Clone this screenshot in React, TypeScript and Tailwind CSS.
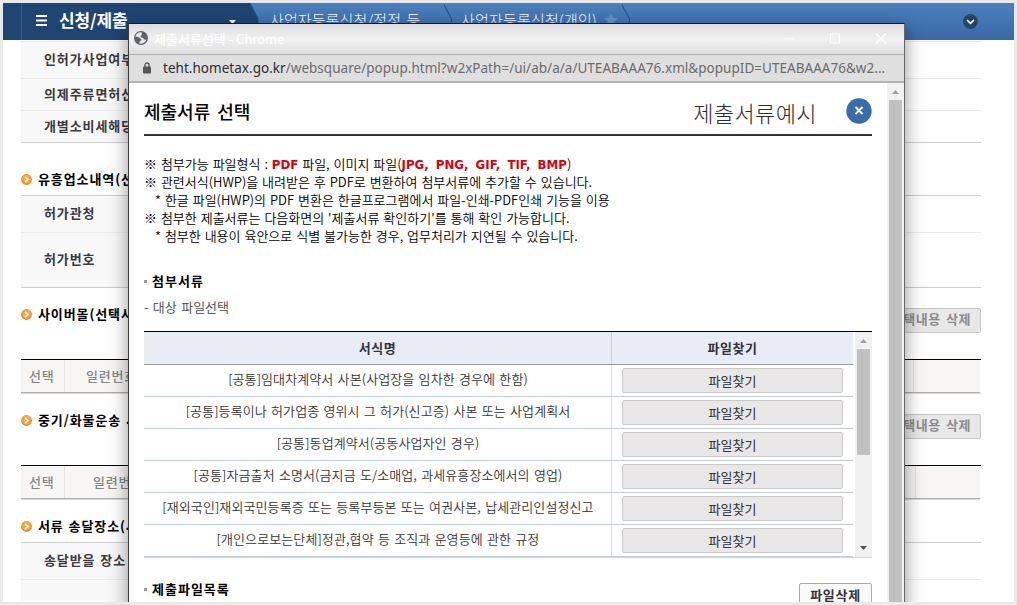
import React from "react";

const KR = "font-['Noto_Sans_CJK_KR','Noto_Sans',sans-serif]";

function Bullet() {
  return (
    <svg className="block h-[11px] w-[11px] shrink-0" viewBox="0 0 11 11">
      <circle cx="5.5" cy="5.5" r="5.4" fill="#f08a1d" />
      <circle cx="5.5" cy="5" r="4.4" fill="#f9a63c" />
      <path d="M4 2.8 6.9 5.5 4 8.2" fill="none" stroke="#fff" strokeWidth="1.7" />
    </svg>
  );
}

function SectionTitle({ title, box, button }: { title: string; box: string; button?: boolean }) {
  return (
    <div className={`flex items-start justify-between ${box}`}>
      <div className="flex h-5 items-center gap-[6px]">
        <Bullet />
        <span className="text-[13px] font-bold tracking-[0.9px] text-black [word-spacing:1px]">{title}</span>
      </div>
      {button && (
        <div className="mt-1 flex h-[25px] w-[93px] items-center justify-end rounded-[2px] border border-[#c8c8c8] bg-[#e9e8e8] pr-[9px] pb-[3px] text-[13px] font-bold tracking-[0.5px] text-[#8b8b8b] [word-spacing:2px]">
          선택내용 삭제
        </div>
      )}
    </div>
  );
}

function FormRow({ label, box }: { label: string; box: string }) {
  return (
    <div className={`flex border-t ${box}`}>
      <div className="flex w-[140px] items-center bg-[#f8f8f8] pb-[2px] pl-[23px] text-[13px] font-bold tracking-[0.9px] text-[#3b3840] [word-spacing:1px]">
        {label}
      </div>
    </div>
  );
}

function GridHead({ number, last }: { number: string; last: string }) {
  return (
    <div className="border-t border-b border-t-black border-b-[#dcdcdc]">
      <div className="mr-px flex h-[33px] border-b border-[#adadad] bg-[#f7f6f5] text-[13px] font-medium tracking-[0.8px] text-[#858585]">
        <div className="flex w-[44px] items-center border-r border-[#e3e3e3] pl-2">선택</div>
        <div className={`flex flex-1 items-center ${number}`}>일련번호</div>
        <div className={`border-l border-[#e3e3e3] ${last}`} />
      </div>
    </div>
  );
}

function Separator() {
  return (
    <svg className="h-[37px] w-[17px] shrink-0" viewBox="0 0 17 37">
      <path d="M-1 0 7.500 16V21L-1 37" fill="none" stroke="#1f5c96" strokeWidth="1.2" />
    </svg>
  );
}

function NavBar() {
  return (
    <div className="flex h-[37px] bg-linear-to-b from-[#4a80bd] to-[#3a69a6] text-white">
      <div className="w-[18px] bg-[#1f4573]" />
      <div className="flex w-[229px] items-center border-l border-[#2c5b93] bg-[#1f4573] pb-[3px] pl-[14px]">
        <svg className="h-[11px] w-[11px]" viewBox="0 0 11 11" fill="#fff">
          <path d="M0 0h11v2H0zM0 4.5h11v2H0zM0 9h11v2H0z" />
        </svg>
        <span className="ml-3 w-[170px] text-[17px] font-bold tracking-[-0.1px]">신청/제출</span>
        <svg className="mt-[3px] h-1 w-[7px]" viewBox="0 0 7 4">
          <path d="M0 0h7L3.500 4z" fill="#fff" />
        </svg>
      </div>
      <svg className="h-[37px] w-[10px]" viewBox="0 0 10 37">
        <path d="M0 0 8 15V22L0 37z" fill="#1f4573" />
        <path d="M0 0 8 15V22L0 37" fill="none" stroke="#1a5c8c" />
      </svg>
      <div className="flex w-[184px] items-center pb-[3px] pl-[10px] text-[15px] font-light tracking-[0.1px] whitespace-nowrap [word-spacing:2px]">
        사업자등록신청/정정 등
      </div>
      <Separator />
      <div className="flex w-[161px] items-center pb-[3px] text-[15px] font-light tracking-[0.2px] whitespace-nowrap">
        사업자등록신청(개인)
        <svg className="ml-[7px] h-[14px] w-[14px]" viewBox="0 0 14 14">
          <path d="m7 0 2 4.8 5 .4-3.900 3.300L11.300 14 7 11l-4.300 3 1.200-5.500L0 5.200l5-.4z" fill="#6394cb" />
        </svg>
      </div>
      <Separator />
      <div className="flex flex-1 items-center justify-end pr-[36px]">
        <svg className="h-[15px] w-[15px]" viewBox="0 0 15 15">
          <circle cx="7.500" cy="7.500" r="7.400" fill="#284467" />
          <path d="m4 6 3.500 3.300L11 6" fill="none" stroke="#fff" strokeWidth="1.700" />
        </svg>
      </div>
    </div>
  );
}

function BackgroundPage() {
  return (
    <>
      <NavBar />
      <div className="mt-px ml-[18px] w-[960px] whitespace-nowrap">
        <FormRow label="인허가사업여부" box="h-[37px] border-[#ebebeb]" />
        <FormRow label="의제주류면허신청" box="h-[32px] border-[#ebebeb]" />
        <FormRow label="개별소비세해당여부" box="h-[32px] border-[#ebebeb]" />
        <SectionTitle title="유흥업소내역(선택사항)" box="h-[53px] border-t border-[#cccccc] pt-[26px]" />
        <FormRow label="허가관청" box="h-[37px] border-[#cccccc]" />
        <FormRow label="허가번호" box="h-[55px] border-[#ebebeb]" />
        <SectionTitle title="사이버몰(선택사항)" box="h-[72px] border-t border-[#cccccc] pt-4" button />
        <GridHead number="pl-[21px]" last="w-[67px]" />
        <SectionTitle title="중기/화물운송 사업" box="h-[71px] pt-4" button />
        <GridHead number="pl-[28px]" last="w-[65px]" />
        <SectionTitle title="서류 송달장소(사업장)" box="h-[42px] pt-4" />
        <FormRow label="송달받을 장소" box="h-[37px] border-[#cccccc]" />
        <FormRow label="" box="h-[37px] border-[#ebebeb]" />
      </div>
    </>
  );
}

function TitleBar() {
  return (
    <div className="flex h-[31px] items-center border-b border-[#acacac] bg-linear-to-b from-[#dcdcdc] via-[#f1f1f1] to-[#dedede] pb-[2px] pl-[5px] text-white">
      <svg className="h-[14px] w-[14px]" viewBox="0 0 14 14">
        <circle cx="7" cy="7" r="7" fill="#5f6368" />
        <path d="M7.600 1.400C4.500 1 2 2.800 1.400 5.800c1.800-.3 3.600.1 4.200 1.300.4.900 1.600.5 1.900 1.300.3.900-1 1.200-1.700 1.900-.5.600-.5 1.400-.3 2.200 3.200.7 6-1 6.900-3.900-1.400.3-2.500-.1-3-1.200-.3-.8-1.300-.6-2-1C6.500 5.900 6.300 5 7 4.500c.8-.5 1-1.200.6-3.100z" fill="#e8e8e8" />
      </svg>
      <span className="ml-[6px] flex-1 pt-[2px] text-[13px]">제출서류선택 - Chrome</span>
      <svg className="h-[11px] w-[104px]" viewBox="0 0 104 11" fill="none" stroke="#fff">
        <path d="M1 6h10M47.500 1h9v9h-9zM93 .5l10 10M103 .5l-10 10" strokeWidth="1.200" />
      </svg>
      <div className="w-[17px]" />
    </div>
  );
}

function UrlBar() {
  return (
    <div className="flex h-[28px] items-center border-b-2 border-[#b2b2b2] bg-[#dfdfe0] pl-[14px] font-['Noto_Sans',sans-serif] text-[13.500px] tracking-[0.030px] whitespace-nowrap text-[#6b6b6b]">
      <svg className="h-[12px] w-[8px]" viewBox="0 0 8 12">
        <rect y="4.500" width="8" height="7" rx="1" fill="#555" />
        <path d="M2 5V3a2 2 0 0 1 4 0v2" fill="none" stroke="#555" strokeWidth="1.300" />
      </svg>
      <span className="ml-3 text-[#2e2e2e]">teht.hometax.go.kr</span>
      <span>/websquare/popup.html?w2xPath=/ui/ab/a/a/UTEABAAA76.xml&amp;popupID=UTEABAAA76&amp;w2...</span>
    </div>
  );
}

const forms = [
  "[공통]임대차계약서 사본(사업장을 임차한 경우에 한함)",
  "[공통]등록이나 허가업종 영위시 그 허가(신고증) 사본 또는 사업계획서",
  "[공통]동업계약서(공동사업자인 경우)",
  "[공통]자금출처 소명서(금지금 도/소매업, 과세유흥장소에서의 영업)",
  "[재외국인]재외국민등록증 또는 등록부등본 또는 여권사본, 납세관리인설정신고",
  "[개인으로보는단체]정관,협약 등 조직과 운영등에 관한 규정",
];

function FileTable() {
  return (
    <div className="flex h-[227px] w-[728px] border-t border-b border-t-black border-b-[#d5d5d5]">
      <div className="w-[709px]">
        <div className="flex h-[33px] border-b border-[#999999] bg-[#e8ecf5] text-[13px] font-bold tracking-[0.6px] text-[#35323c]">
          <div className="flex w-[468px] items-center justify-center border-r border-[#c5ccdb]">서식명</div>
          <div className="flex flex-1 items-center justify-center">파일찾기</div>
        </div>
        {forms.map((f) => (
          <div key={f} className="flex h-[32px] border-b border-[#bfcddb] text-[13px] text-[#333333]">
            <div className="flex w-[468px] items-center justify-center border-r border-[#dcdcdc] pb-[3px] pl-px font-[350] tracking-[0.1px] whitespace-nowrap [word-spacing:1.200px]">
              {f}
            </div>
            <div className="flex-1 pt-[3px] pl-[10px]">
              <div className="flex h-[25px] w-[221px] items-center justify-center rounded-[2px] border border-[#cacaca] bg-[#e8e6e6]">
                파일찾기
              </div>
            </div>
          </div>
        ))}
      </div>
      <div className="ml-[2px] flex flex-1 flex-col items-center bg-[#f1f1f1] pt-[7px] pb-[7px]">
        <svg className="h-1 w-[7px]" viewBox="0 0 7 4">
          <path d="M0 4h7L3.500 0z" fill="#a0a0a0" />
        </svg>
        <div className="mt-[6px] h-[106px] w-[13px] bg-[#c1c1c1]" />
        <svg className="mt-auto h-1 w-[7px]" viewBox="0 0 7 4">
          <path d="M0 0h7L3.500 4z" fill="#505050" />
        </svg>
      </div>
    </div>
  );
}

function SmallHeading({ children }: { children: React.ReactNode }) {
  return (
    <div className="flex h-5 items-center gap-[5px] text-[13px] font-bold tracking-[1px] text-black">
      <span className="h-[3px] w-[3px] bg-[#999999]" />
      {children}
    </div>
  );
}

function Red({ children }: { children: React.ReactNode }) {
  return (
    <b className="font-['DejaVu_Sans',sans-serif] text-[11.800px] leading-none text-[#d9000f] [word-spacing:3px]">
      {children}
    </b>
  );
}

function PopupWindow() {
  return (
    <div className="absolute top-5 left-[125px] flex h-[590px] w-[777px] flex-col border border-[#3c3c3c] border-t-[#1b1b1b] border-r-[#666666] bg-white shadow-[0_6px_18px_0_rgba(0,0,0,0.42)]">
      <TitleBar />
      <UrlBar />
      <div className="flex flex-1">
        <div className="w-[758px] pl-[15px]">
          <div className="flex h-[53px] w-[728px] items-center border-b-2 border-[#333333] pt-[5px]">
            <span className="flex-1 text-[18px] font-medium text-black [word-spacing:3px]">제출서류 선택</span>
            <span className="mr-[29px] pt-[2px] text-[22px] font-light tracking-[0.4px] text-[#2f2b33]">제출서류예시</span>
            <svg className="h-[26px] w-[26px]" viewBox="0 0 26 26">
              <circle cx="13" cy="13" r="12.700" fill="#3a6ca9" />
              <path d="m9.500 9 7 7M16.500 9l-7 7" stroke="#fff" strokeWidth="1.900" />
            </svg>
          </div>
          <div className="mt-[19px] text-[13px] leading-[18px] font-[350] whitespace-pre text-black [word-spacing:1px]">
            <p className="h-[18px]">※ 첨부가능 파일형식 : <Red>PDF</Red> 파일, 이미지 파일(<Red>JPG, PNG, GIF, TIF, BMP</Red>)</p>
            <p>※ 관련서식(HWP)을 내려받은 후 PDF로 변환하여 첨부서류에 추가할 수 있습니다.</p>
            <p className="pl-[11px]">* 한글 파일(HWP)의 PDF 변환은 한글프로그램에서 파일-인쇄-PDF인쇄 기능을 이용</p>
            <p>※ 첨부한 제출서류는 다음화면의 '제출서류 확인하기'를 통해 확인 가능합니다.</p>
            <p className="pl-[11px]">* 첨부한 내용이 육안으로 식별 불가능한 경우, 업무처리가 지연될 수 있습니다.</p>
          </div>
          <div className="mt-[26px]">
            <SmallHeading>첨부서류</SmallHeading>
          </div>
          <div className="mt-[6px] mb-[14px] h-5 text-[13px] leading-5 font-[350] text-[#444444] [word-spacing:1.500px]">- 대상 파일선택</div>
          <FileTable />
          <div className="mt-[21px] flex w-[728px] justify-between">
            <SmallHeading>제출파일목록</SmallHeading>
            <div className="mt-1 flex h-[25px] w-[73px] items-center justify-center rounded-[2px] border border-[#aaaaaa] bg-[#f9f9f9] pb-[2px] text-[13px] font-bold tracking-[0.7px] text-[#333333]">
              파일삭제
            </div>
          </div>
        </div>
        <div className="flex w-[17px] flex-col items-center bg-[#f1f1f1] pt-[7px]">
          <svg className="h-1 w-[7px]" viewBox="0 0 7 4">
            <path d="M0 4h7L3.500 0z" fill="#a0a0a0" />
          </svg>
          <div className="mt-[6px] w-[13px] flex-1 bg-[#c1c1c1]" />
        </div>
      </div>
    </div>
  );
}

export default function App() {
  return (
    <div className={`h-[605px] w-[1017px] overflow-hidden bg-[#e9e9e9] p-[3px] ${KR}`}>
      <div className="relative h-[599px] w-[1011px] overflow-hidden bg-white">
        <BackgroundPage />
        <PopupWindow />
      </div>
    </div>
  );
}
